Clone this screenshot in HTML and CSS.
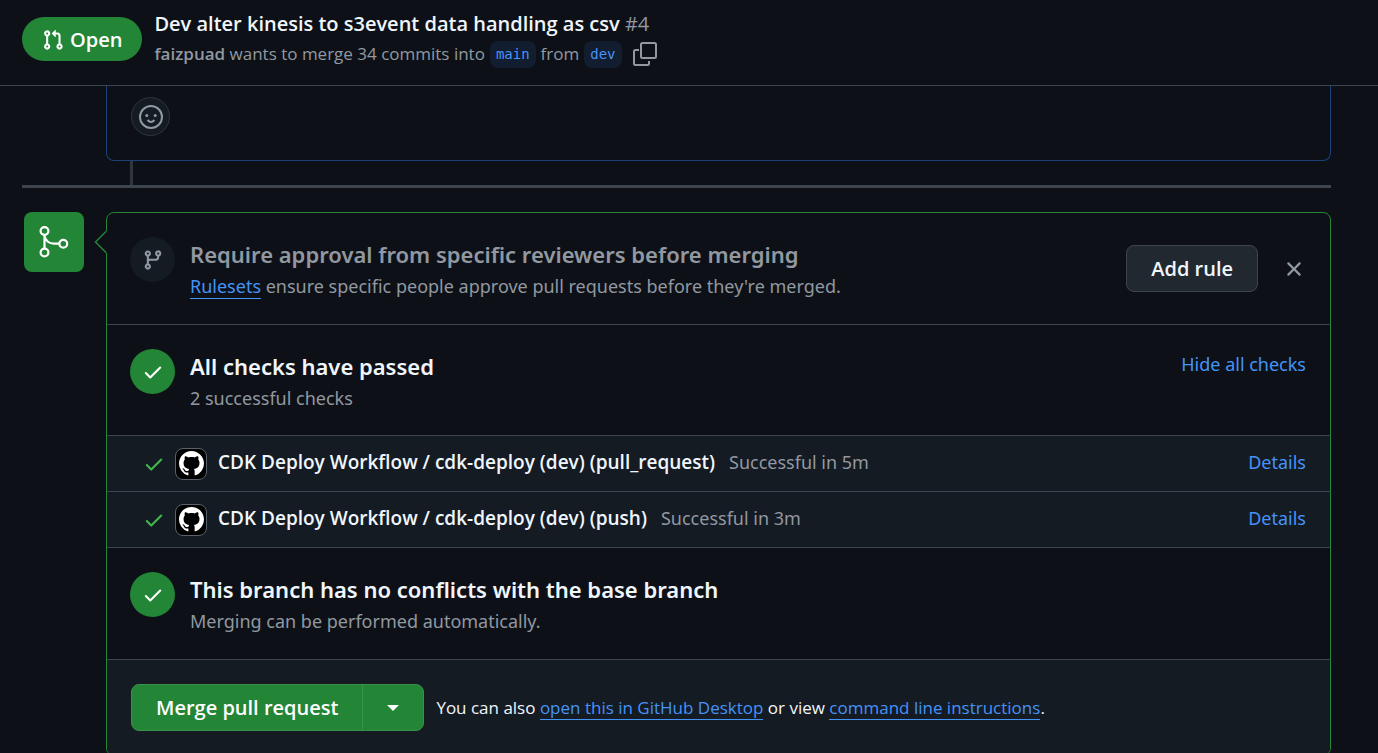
FILE: index.html
```html
<!DOCTYPE html>
<html lang="en">
<head>
<meta charset="utf-8">
<title>Dev alter kinesis to s3event data handling as csv #4</title>
<link rel="stylesheet" href="styles.css">
</head>
<body>
<svg class="symbols" aria-hidden="true">
  <symbol id="check" viewBox="0 0 16 16"><path d="M13.78 4.22a.75.75 0 0 1 0 1.06l-7.25 7.25a.75.75 0 0 1-1.06 0L2.22 9.28a.751.751 0 0 1 .018-1.042.751.751 0 0 1 1.042-.018L6 10.94l6.72-6.72a.75.75 0 0 1 1.06 0Z"/></symbol>
  <symbol id="mark" viewBox="0 0 16 16"><path d="M8 0c4.42 0 8 3.58 8 8a8.013 8.013 0 0 1-5.45 7.59c-.4.08-.55-.17-.55-.38 0-.27.01-1.13.01-2.2 0-.75-.25-1.23-.54-1.48 1.78-.2 3.65-.88 3.65-3.95 0-.88-.31-1.59-.82-2.15.08-.2.36-1.02-.08-2.12 0 0-.67-.22-2.2.82-.64-.18-1.32-.27-2-.27-.68 0-1.36.09-2 .27-1.53-1.03-2.2-.82-2.2-.82-.44 1.1-.16 1.92-.08 2.12-.51.56-.82 1.28-.82 2.15 0 3.06 1.86 3.75 3.64 3.95-.23.2-.44.55-.51 1.07-.46.21-1.61.55-2.33-.66-.15-.24-.6-.83-1.23-.82-.67.01-.27.38.01.53.34.19.73.9.82 1.13.16.45.68 1.31 2.69.94 0 .67.01 1.3.01 1.49 0 .21-.15.45-.55.38A7.995 7.995 0 0 1 0 8c0-4.42 3.58-8 8-8Z"/></symbol>
</svg>

<header class="header">
  <span class="state">
    <svg class="icon-22" viewBox="0 0 16 16" aria-hidden="true"><path d="M1.5 3.25a2.25 2.25 0 1 1 3 2.122v5.256a2.251 2.251 0 1 1-1.5 0V5.372A2.25 2.25 0 0 1 1.5 3.25Zm5.677-.177L9.573.677A.25.25 0 0 1 10 .854V2.5h1A2.5 2.5 0 0 1 13.5 5v5.628a2.251 2.251 0 1 1-1.5 0V5a1 1 0 0 0-1-1h-1v1.646a.25.25 0 0 1-.427.177L7.177 3.427a.25.25 0 0 1 0-.354ZM3.75 2.5a.75.75 0 1 0 0 1.5.75.75 0 0 0 0-1.5Zm0 9.5a.75.75 0 1 0 0 1.5.75.75 0 0 0 0-1.5Zm8.25.75a.75.75 0 1 0 1.5 0 .75.75 0 0 0-1.5 0Z"/></svg>
    Open
  </span>
  <div class="summary">
    <h1 class="title">Dev alter kinesis to s3event data handling as csv <span class="number">#4</span></h1>
    <div class="meta">
      <span><a class="author" href="#author">faizpuad</a> wants to merge 34 commits into</span>
      <a class="branch" href="#main">main</a>
      <span>from</span>
      <a class="branch" href="#dev">dev</a>
      <button class="copy" type="button" aria-label="Copy branch name">
        <svg class="copy-icon" viewBox="0 0 26 26" aria-hidden="true"><rect x="9" y="2" width="15" height="15" rx="1.5"/><path d="M7 9H3.500A1.500 1.500 0 0 0 2 10.500V22.500A1.500 1.500 0 0 0 3.500 24H15.500A1.500 1.500 0 0 0 17 22.500V20"/></svg>
      </button>
    </div>
  </div>
</header>

<main class="content">
  <section class="comment">
    <button class="react" type="button" aria-label="Add reaction">
      <svg class="face" viewBox="0 0 24 24" aria-hidden="true"><circle cx="12" cy="12" r="11"/><path d="M8.500 15Q12 18.800 15.500 15"/><circle class="eye" cx="7.800" cy="10.500" r="1.500"/><circle class="eye" cx="16.200" cy="10.500" r="1.500"/></svg>
    </button>
  </section>
  <div class="thread"></div>
  <hr class="divider">

  <div class="merge">
    <div class="badge">
      <svg class="badge-icon" viewBox="0 0 60 60" aria-hidden="true"><circle cx="20.500" cy="19" r="3.900"/><circle cx="20.500" cy="40.500" r="3.900"/><circle cx="39.300" cy="31.700" r="3.900"/><path d="M20.500 23V36.500M20.500 23.500C21 28.500 25 31.700 30 31.700H35.300"/></svg>
    </div>
    <section class="card">
      <svg class="caret" viewBox="0 0 13 22" aria-hidden="true"><path class="caret-fill" d="M13 .5H12L1.500 11L12 21.500H13Z"/><path class="caret-line" d="M12 .5L1.500 11L12 21.500"/></svg>

      <div class="row">
        <span class="disc muted-disc"><svg class="icon-22" viewBox="0 0 16 16" aria-hidden="true"><path d="M9.500 3.250a2.250 2.250 0 1 1 3 2.122V6A2.500 2.500 0 0 1 10 8.500H6a1 1 0 0 0-1 1v1.128a2.251 2.251 0 1 1-1.500 0V5.372a2.250 2.250 0 1 1 1.500 0v1.836A2.493 2.493 0 0 1 6 7h4a1 1 0 0 0 1-1v-.628A2.250 2.250 0 0 1 9.500 3.250Zm-6 0a.75.75 0 1 0 1.500 0 .75.75 0 0 0-1.500 0Zm8.250-.75a.75.75 0 1 0 0 1.500.75.75 0 0 0 0-1.500ZM4.250 12a.75.75 0 1 0 0 1.500.75.75 0 0 0 0-1.500Z"/></svg></span>
        <div class="text">
          <h2 class="heading muted">Require approval from specific reviewers before merging</h2>
          <p class="note"><a class="underlined" href="#rulesets">Rulesets</a> ensure specific people approve pull requests before they're merged.</p>
        </div>
        <div class="actions">
          <button class="add" type="button">Add rule</button>
          <button class="close" type="button" aria-label="Dismiss"><svg class="close-icon" viewBox="0 0 16 16" aria-hidden="true"><path d="M3.720 3.720a.75.75 0 0 1 1.060 0L8 6.940l3.220-3.220a.749.749 0 0 1 1.275.326.749.749 0 0 1-.215.734L9.060 8l3.220 3.220a.749.749 0 0 1-.326 1.275.749.749 0 0 1-.734-.215L8 9.060l-3.220 3.220a.751.751 0 0 1-1.042-.018.751.751 0 0 1-.018-1.042L6.940 8 3.720 4.780a.75.75 0 0 1 0-1.060Z"/></svg></button>
        </div>
      </div>

      <div class="row checks-summary">
        <span class="disc"><svg class="icon-22" aria-hidden="true"><use href="#check"/></svg></span>
        <div class="text">
          <h2 class="heading">All checks have passed</h2>
          <p class="note">2 successful checks</p>
        </div>
        <a class="link" href="#checks">Hide all checks</a>
      </div>

      <ul class="checks">
        <li class="check">
          <svg class="icon-22 pass" aria-hidden="true"><use href="#check"/></svg>
          <span class="avatar"><svg class="mark" aria-hidden="true"><use href="#mark"/></svg></span>
          <div class="run">
            <strong class="job">CDK Deploy Workflow / cdk-deploy (dev) (pull_request)</strong>
            <span class="result">Successful in 5m</span>
            <a class="link" href="#pull-request-run">Details</a>
          </div>
        </li>
        <li class="check">
          <svg class="icon-22 pass" aria-hidden="true"><use href="#check"/></svg>
          <span class="avatar"><svg class="mark" aria-hidden="true"><use href="#mark"/></svg></span>
          <div class="run">
            <strong class="job">CDK Deploy Workflow / cdk-deploy (dev) (push)</strong>
            <span class="result">Successful in 3m</span>
            <a class="link" href="#push-run">Details</a>
          </div>
        </li>
      </ul>

      <div class="row">
        <span class="disc"><svg class="icon-22" aria-hidden="true"><use href="#check"/></svg></span>
        <div class="text">
          <h2 class="heading">This branch has no conflicts with the base branch</h2>
          <p class="note">Merging can be performed automatically.</p>
        </div>
      </div>

      <footer class="footer">
        <div class="split">
          <button class="merge-button" type="button">Merge pull request</button>
          <button class="menu-button" type="button" aria-label="Select merge method"><svg class="arrow" viewBox="0 0 12 6" aria-hidden="true"><path d="M0 0H12L6 6Z"/></svg></button>
        </div>
        <p class="also">You can also <a class="underlined" href="#desktop">open this in GitHub Desktop</a> or view <a class="underlined" href="#cli">command line instructions</a>.</p>
      </footer>
    </section>
  </div>
</main>
</body>
</html>
```
FILE: styles.css
```css
* { box-sizing: border-box; }

body {
  margin: 0;
  height: 100vh;
  overflow: hidden;
  background: #0d1117;
  color: #f0f6fc;
  font-family: "Noto Sans", "Open Sans", sans-serif;
  font-size: 18px;
  line-height: 30px;
}

h1, h2, p, ul { margin: 0; padding: 0; }
a { color: #4493f8; text-decoration: none; }
button { font: inherit; color: inherit; cursor: pointer; }
svg { display: block; fill: currentColor; flex: none; }

.header, .job, .add, .footer { font-family: "Open Sans", "Noto Sans", sans-serif; }

.symbols { position: absolute; width: 0; height: 0; }
.icon-22 { width: 22px; height: 22px; }

.header {
  display: flex;
  align-items: flex-start;
  gap: 12px;
  padding: 9px 22px 16px;
  border-bottom: 1px solid #3d444d;
}
.state {
  display: flex;
  align-items: center;
  gap: 6px;
  height: 44px;
  margin-top: 8px;
  padding: 2px 20px 0;
  border-radius: 22px;
  background: #238636;
  color: #fff;
  font-size: 20px;
  font-weight: 600;
}
.title { font-size: 20px; font-weight: 600; line-height: 30px; }
.number { color: #9198a1; font-weight: 400; }
.meta {
  display: flex;
  align-items: center;
  gap: 5px;
  color: #9198a1;
  font-size: 17px;
}
.author { color: #9198a1; font-weight: 600; }
.branch {
  padding: 0 6px;
  border-radius: 8px;
  background: #121d2f;
  font-family: "DejaVu Sans Mono", monospace;
  font-size: 14px;
  line-height: 27px;
}
.copy { padding: 0; margin-left: 5px; border: 0; background: none; color: #9198a1; }
.copy-icon { width: 26px; height: 26px; fill: none; stroke: currentColor; stroke-width: 2; }

.content { padding: 0 47px 0 22px; }
.comment {
  height: 75px;
  margin-left: 84px;
  padding: 11px 24px;
  border: 1px solid #1c4078;
  border-top: 0;
  border-radius: 0 0 8px 8px;
}
.react {
  display: grid;
  place-items: center;
  width: 39px;
  height: 39px;
  padding: 0;
  border: 1px solid #30363d;
  border-radius: 50%;
  background: #151b23;
  color: #9198a1;
}
.face { width: 24px; height: 24px; fill: none; stroke: currentColor; stroke-width: 2; }
.eye { fill: currentColor; stroke: none; }
.thread { width: 3px; height: 24px; margin-left: 108px; background: #30363d; }
.divider { height: 3px; margin: 0 0 24px; border: 0; background: #3d444d; }

.merge { display: flex; gap: 22px; padding-left: 2px; }
.badge { flex: none; width: 60px; height: 60px; border-radius: 8px; background: #238636; color: #fff; }
.badge-icon { width: 60px; height: 60px; fill: none; stroke: currentColor; stroke-width: 2.2; }
.card { position: relative; flex: 1; border: 1px solid #238636; border-radius: 8px; }
.caret {
  position: absolute;
  left: -13px;
  top: 18px;
  width: 13px;
  height: 22px;
}
.caret-fill { fill: #0d1117; }
.caret-line { fill: none; stroke: #238636; stroke-width: 1.5; }

.row {
  display: flex;
  align-items: flex-start;
  gap: 15px;
  padding: 24px 24px 21px 23px;
  border-bottom: 1px solid #3d444d;
}
.checks-summary { padding-bottom: 20px; }
.disc {
  display: grid;
  place-items: center;
  flex: none;
  width: 45px;
  height: 45px;
  border-radius: 50%;
  background: #238636;
  color: #fff;
}
.muted-disc { background: #151b23; color: #9198a1; }
.text { flex: 1; padding: 1px 0 2px; }
.heading { font-size: 22px; font-weight: 600; line-height: 32px; }
.muted { color: #9198a1; }
.note { padding-top: 1px; color: #9198a1; }
.underlined { border-bottom: 1px solid #4493f8; }
.actions { display: flex; align-items: center; gap: 24px; padding: 8px 0; }
.add {
  height: 47px;
  padding: 0 24px;
  border: 1px solid #3d444d;
  border-radius: 8px;
  background: #212830;
  font-size: 20px;
  font-weight: 600;
}
.close { padding: 0; border: 0; background: none; color: #9198a1; }
.close-icon { width: 24px; height: 24px; }

.checks { list-style: none; background: #151b23; }
.check {
  display: flex;
  align-items: center;
  height: 56px;
  padding: 0 24px 0 36px;
  border-bottom: 1px solid #3d444d;
}
.pass { color: #3fb950; }
.avatar {
  display: grid;
  place-items: center;
  flex: none;
  width: 32px;
  height: 32px;
  margin: 0 11px 0 10px;
  border: 1px solid #59616b;
  border-radius: 8px;
  background: #000;
  color: #fff;
}
.mark { width: 25px; height: 25px; }
.run { display: flex; flex: 1; align-items: baseline; padding-bottom: 4px; }
.job { font-size: 19px; font-weight: 600; }
.result { flex: 1; margin-left: 14px; color: #9198a1; }

.footer {
  display: flex;
  align-items: center;
  gap: 12px;
  padding: 24px;
  border-radius: 0 0 7px 7px;
  background: #151b23;
}
.split { display: flex; height: 47px; border: 1px solid #39914a; border-radius: 8px; background: #238636; color: #fff; }
.merge-button { padding: 0 24px; border: 0; background: none; font-size: 20px; font-weight: 600; }
.menu-button { padding: 0 24px; border: 0; border-left: 1px solid #39914a; background: none; }
.arrow { width: 12px; height: 6px; }
.also { font-size: 17px; }
```
